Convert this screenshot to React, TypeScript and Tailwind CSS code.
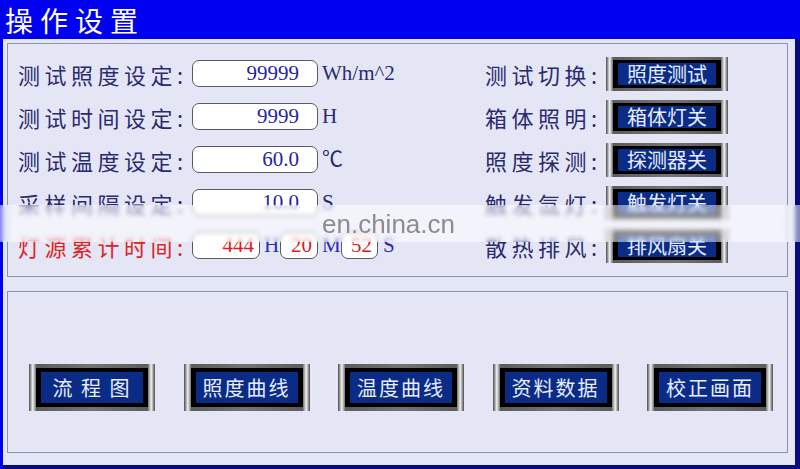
const cjk = { fontFamily: '"Noto Sans CJK SC", sans-serif' };
const serif = { fontFamily: '"Liberation Serif", "Noto Sans CJK SC", serif' };

const leftRows = [
  { label: "测试照度设定:", value: "99999", unit: "Wh/m^2" },
  { label: "测试时间设定:", value: "9999", unit: "H" },
  { label: "测试温度设定:", value: "60.0", unit: "℃" },
  { label: "采样间隔设定:", value: "10.0", unit: "S" },
];

const rightRows = [
  { label: "测试切换:", button: "照度测试" },
  { label: "箱体照明:", button: "箱体灯关" },
  { label: "照度探测:", button: "探测器关" },
  { label: "触发氙灯:", button: "触发灯关" },
  { label: "散热排风:", button: "排风扇关" },
];

const bottomButtons = ["流 程 图", "照度曲线", "温度曲线", "资料数据", "校正画面"];

function SmallButton({ text }: { text: string }) {
  return (
    <div className="w-[122px] h-[34px] px-[7px] py-[3px] bg-[linear-gradient(to_right,#4a4a4a,#f2f2f2_3%,#5c5c5c_6%,#747474_50%,#5c5c5c_94%,#f2f2f2_97%,#4a4a4a)]">
      <div className="h-full bg-black px-[5px] py-[3px]">
        <div
          className="h-full bg-[#0b2c86] flex items-center justify-center text-[20px] leading-none text-[#e8eeff]"
          style={cjk}
        >
          {text}
        </div>
      </div>
    </div>
  );
}

function BigButton({ text }: { text: string }) {
  return (
    <div className="w-[126px] h-[47px] px-[7px] py-[4px] bg-[linear-gradient(to_right,#4a4a4a,#f2f2f2_3%,#5c5c5c_6%,#747474_50%,#5c5c5c_94%,#f2f2f2_97%,#4a4a4a)]">
      <div className="h-full bg-black px-[5px] py-[4px]">
        <div
          className="h-full bg-[#0b2c86] flex items-center justify-center text-[20px] leading-none tracking-[2px] text-[#e8eeff] whitespace-pre"
          style={cjk}
        >
          {text}
        </div>
      </div>
    </div>
  );
}

export default function App() {
  return (
    <div className="relative w-[800px] h-[469px] bg-[#0000f0] flex flex-col overflow-hidden">
      {/* Title bar */}
      <div
        className="h-[39px] shrink-0 pl-[5px] flex items-center text-white text-[28px] leading-none tracking-[7px]"
        style={cjk}
      >
        操作设置
      </div>

      {/* Body */}
      <div className="flex-1 flex pl-[3px]">
        <div className="flex-1 border-r-[5px] border-b-[4px] border-[#0a0a80] bg-[#e4e6f6] flex flex-col pl-[4px] pr-[7px] pt-[4px] pb-[12px] gap-[14px]">
          {/* Settings panel */}
          <div className="h-[234px] shrink-0 border border-[#8a94a8] pt-[8px] flex">
            <div className="w-[477px] pl-[10px] flex flex-col">
              {leftRows.map((row) => (
                <div key={row.label} className="h-[43px] flex items-center">
                  <div
                    className="w-[174px] text-[22px] leading-none tracking-[4.5px] text-[#2a2a70] whitespace-nowrap"
                    style={cjk}
                  >
                    {row.label}
                  </div>
                  <div
                    className="w-[126px] h-[27px] rounded-[7px] border border-[#555a66] bg-white flex items-center justify-end pr-[18px] text-[21px] leading-none text-[#2424a8]"
                    style={serif}
                  >
                    {row.value}
                  </div>
                  <div
                    className="ml-[4px] text-[21px] leading-none text-[#2a2a70]"
                    style={serif}
                  >
                    {row.unit}
                  </div>
                </div>
              ))}
              <div className="h-[43px] flex items-center">
                <div
                  className="w-[174px] text-[22px] leading-none tracking-[4.5px] text-[#e02424] whitespace-nowrap"
                  style={cjk}
                >
                  灯源累计时间:
                </div>
                <div
                  className="w-[68px] h-[27px] rounded-[7px] border border-[#555a66] bg-white flex items-center justify-end pr-[5px] text-[21px] leading-none text-[#d82020]"
                  style={serif}
                >
                  444
                </div>
                <div className="w-[20px] pl-[4px] text-[21px] leading-none text-[#2a2ab8]" style={serif}>
                  H
                </div>
                <div
                  className="w-[38px] h-[27px] rounded-[7px] border border-[#555a66] bg-white flex items-center justify-end pr-[5px] text-[21px] leading-none text-[#d82020]"
                  style={serif}
                >
                  20
                </div>
                <div className="w-[23px] pl-[4px] text-[21px] leading-none text-[#2a2ab8]" style={serif}>
                  M
                </div>
                <div
                  className="w-[37px] h-[27px] rounded-[7px] border border-[#555a66] bg-white flex items-center justify-end pr-[5px] text-[21px] leading-none text-[#d82020]"
                  style={serif}
                >
                  52
                </div>
                <div className="pl-[5px] text-[21px] leading-none text-[#2a2ab8]" style={serif}>
                  S
                </div>
              </div>
            </div>

            <div className="flex flex-col">
              {rightRows.map((row) => (
                <div key={row.label} className="h-[43px] flex items-center">
                  <div
                    className="w-[121px] text-[22px] leading-none tracking-[4.5px] text-[#2a2a70] whitespace-nowrap"
                    style={cjk}
                  >
                    {row.label}
                  </div>
                  <SmallButton text={row.button} />
                </div>
              ))}
            </div>
          </div>

          {/* Navigation panel */}
          <div className="flex-1 border border-[#8a94a8] pt-[72px] pl-[21px] flex gap-[28.5px]">
            {bottomButtons.map((b) => (
              <BigButton key={b} text={b} />
            ))}
          </div>
        </div>
      </div>

      {/* Watermark band */}
      <div className="absolute left-0 right-0 top-[205px] h-[37px] bg-white/50 backdrop-blur-[2px] flex items-center pl-[322px]">
        <span
          className="text-[26px] leading-none text-[#8c8c8c]"
          style={{ fontFamily: '"Liberation Sans", Arial, sans-serif' }}
        >
          en.china.cn
        </span>
      </div>
    </div>
  );
}
